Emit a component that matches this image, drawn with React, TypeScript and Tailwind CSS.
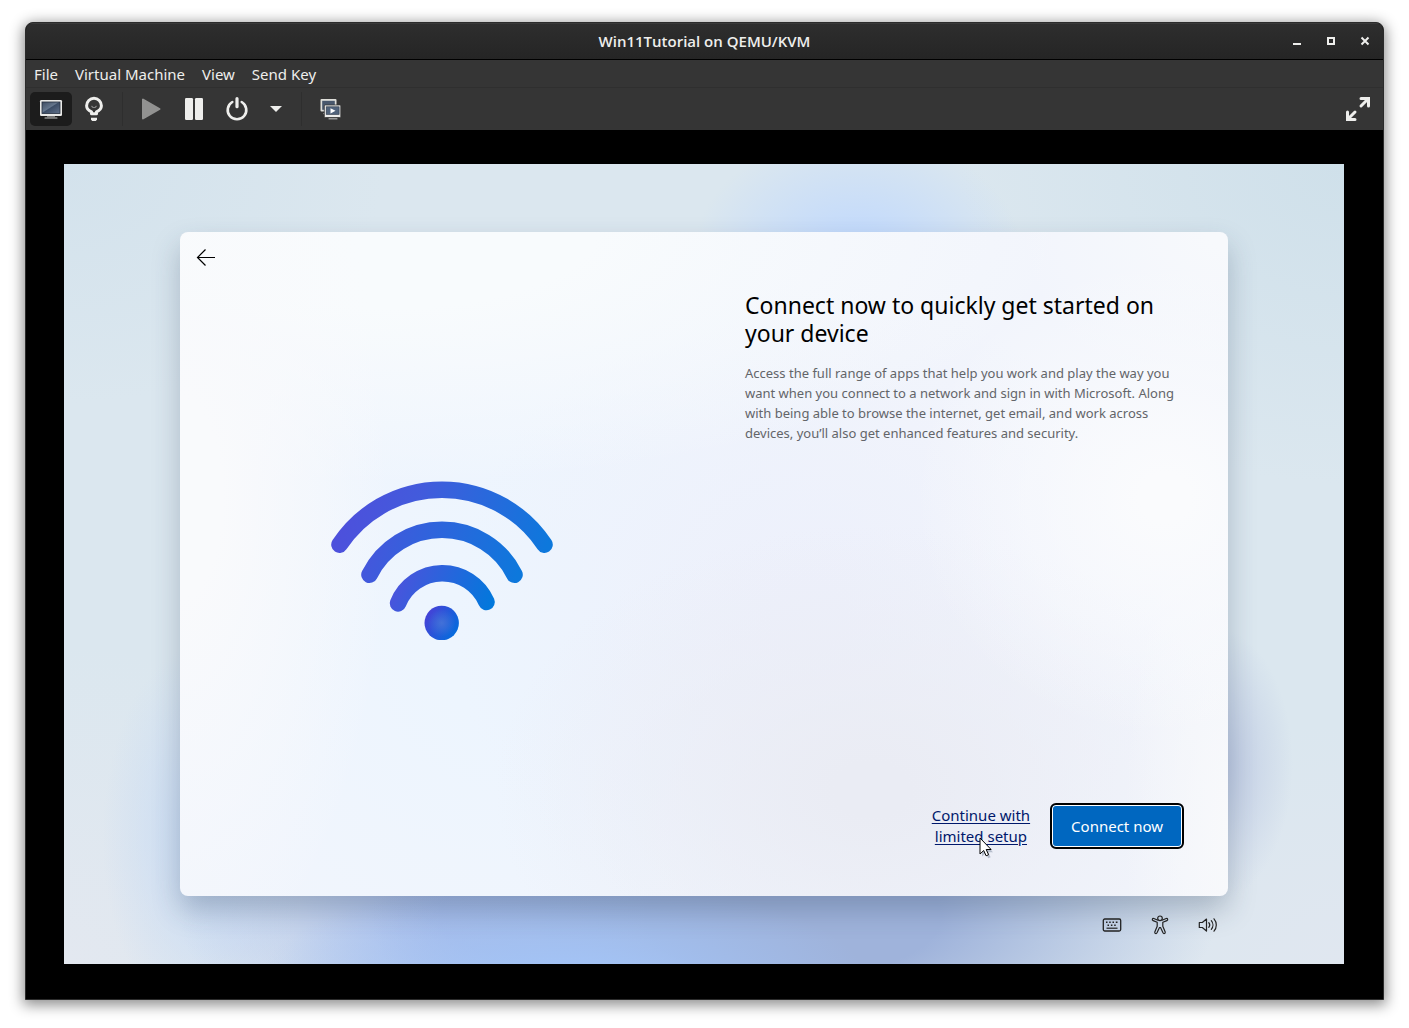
import React from 'react';

function MonitorIcon() {
  return (
    <svg width="24" height="24" viewBox="0 0 24 24" aria-hidden="true">
      <defs>
        <linearGradient id="screen" x1="0" y1="0" x2="1" y2="1">
          <stop offset="0" stopColor="#3d4b60" />
          <stop offset="0.45" stopColor="#65768c" />
          <stop offset="0.5" stopColor="#3c4d66" />
          <stop offset="1" stopColor="#61718a" />
        </linearGradient>
      </defs>
      <rect x="1" y="3" width="22" height="16" rx="1.2" fill="#e9e9e7" />
      <rect x="3" y="5" width="18" height="11.5" fill="url(#screen)" stroke="#26303f" strokeWidth="0.8" />
      <rect x="8" y="19" width="8" height="1.5" fill="#777" />
      <rect x="5.5" y="20.2" width="13" height="1.6" rx="0.6" fill="#8c8c8a" />
    </svg>
  );
}

function BulbIcon() {
  return (
    <svg width="24" height="26" viewBox="0 0 24 26" fill="none" aria-hidden="true">
      <path d="M9.500 17.800v-2C6.600 14.500 4.600 12.800 4.600 9.700a7.400 7.400 0 0 1 14.800 0c0 3.100-2 4.800-4.900 6.100v2z" stroke="#eeeeec" strokeWidth="3" strokeLinejoin="round" />
      <path d="M9.500 10l1.400 1.500h2.200l1.400-1.500" stroke="#888" strokeWidth="1.100" />
      <path d="M9 21.800h6v1.600l-1.200 1.500h-3.600L9 23.400z" fill="#eeeeec" />
    </svg>
  );
}

function PowerIcon() {
  return (
    <svg width="24" height="24" viewBox="0 0 24 24" fill="none" stroke="#eeeeec" aria-hidden="true">
      <path d="M7.300 5A9.300 9.300 0 1 0 16.700 5" strokeWidth="2.600" strokeLinecap="round" />
      <path d="M12 1.700v8" strokeWidth="3.200" strokeLinecap="round" />
    </svg>
  );
}

function SnapshotsIcon() {
  return (
    <svg width="24" height="24" viewBox="0 0 24 24" aria-hidden="true">
      <rect x="1.500" y="2" width="16" height="12.500" rx="1" fill="#deded9" />
      <rect x="3.200" y="3.800" width="12.600" height="9" fill="#49586d" />
      <rect x="4" y="16" width="4" height="1.200" fill="#888" />
      <rect x="5.300" y="8" width="16.500" height="12.500" rx="1" fill="#eeeeec" stroke="#353535" strokeWidth="0.800" />
      <rect x="7.200" y="9.800" width="12.900" height="7.600" fill="#51637b" stroke="#2b3646" strokeWidth="0.600" />
      <path d="M11.500 11.200l5 2.600-5 2.600z" fill="#fff" />
      <rect x="9.500" y="21" width="9" height="1.500" rx="0.500" fill="#999" />
    </svg>
  );
}

function FullscreenIcon() {
  return (
    <svg width="26" height="26" viewBox="0 0 26 26" fill="none" stroke="#eeeeec" strokeWidth="3" aria-hidden="true">
      <path d="M16 2.500h7.500V10" strokeLinecap="round" />
      <path d="M22.500 3.500L16 10" strokeLinecap="round" />
      <path d="M18 1h7v7z" fill="#eeeeec" stroke="none" />
      <path d="M10 23.500H2.500V16" strokeLinecap="round" />
      <path d="M3.500 22.500L10 16" strokeLinecap="round" />
      <path d="M8 25H1v-7z" fill="#eeeeec" stroke="none" />
    </svg>
  );
}

function WifiArt() {
  return (
    <svg width="224" height="160" viewBox="0 0 224 160" fill="none" aria-hidden="true">
      <defs>
        <linearGradient id="arc1" gradientUnits="userSpaceOnUse" x1="10" y1="40" x2="212" y2="90">
          <stop offset="0" stopColor="#4d50dc" />
          <stop offset="0.35" stopColor="#425bdc" />
          <stop offset="1" stopColor="#0d78dc" />
        </linearGradient>
        <linearGradient id="arc2" gradientUnits="userSpaceOnUse" x1="38" y1="70" x2="184" y2="110">
          <stop offset="0" stopColor="#4457dc" />
          <stop offset="1" stopColor="#0d78dc" />
        </linearGradient>
        <linearGradient id="arc3" gradientUnits="userSpaceOnUse" x1="64" y1="95" x2="158" y2="132">
          <stop offset="0" stopColor="#4d52dc" />
          <stop offset="1" stopColor="#0278dc" />
        </linearGradient>
        <radialGradient id="dotGlow">
          <stop offset="0" stopColor="#4a78d8" stopOpacity="0.800" />
          <stop offset="1" stopColor="#4a78d8" stopOpacity="0" />
        </radialGradient>
        <linearGradient id="dot" x1="0" y1="0.200" x2="1" y2="0.800">
          <stop offset="0" stopColor="#4a3fd6" />
          <stop offset="1" stopColor="#006fdd" />
        </linearGradient>
      </defs>
      <g strokeWidth="16.600" strokeLinecap="round">
        <path d="M9.500 64.700A123 123 0 0 1 214.500 64.700" stroke="url(#arc1)" />
        <path d="M39.500 94.700A81 81 0 0 1 184.500 94.700" stroke="url(#arc2)" />
        <path d="M68 123.300A48 48 0 0 1 156.500 122" stroke="url(#arc3)" />
      </g>
      <circle cx="111.700" cy="143" r="17.200" fill="url(#dot)" />
      <circle cx="111.700" cy="143" r="14" fill="url(#dotGlow)" />
    </svg>
  );
}

function KeyboardIcon() {
  return (
    <svg width="20" height="20" viewBox="0 0 20 20" fill="none" stroke="#222" aria-hidden="true">
      <rect x="1.300" y="4" width="17.400" height="12" rx="1.500" strokeWidth="1.300" />
      <path d="M4 7.300h1.500M7.200 7.300h1.500M10.500 7.300H12M13.800 7.300h1.700M5.500 10.200H7M8.900 10.200h1.500M12.200 10.200h1.500" strokeWidth="1.500" />
      <path d="M4.500 13.200h11" strokeWidth="1.200" />
    </svg>
  );
}

function AccessibilityIcon() {
  return (
    <svg width="20" height="20" viewBox="0 0 20 20" fill="none" stroke="#222" strokeWidth="1.200" strokeLinejoin="round" aria-hidden="true">
      <circle cx="10" cy="3.300" r="2.300" />
      <path d="M8 5.200L3.800 3.500c-1.500-.4-2.100 1.500-.7 2.100L7.200 7.300v4L4.800 17c-.4 1.500 1.500 2.200 2.200.8l2.500-5.300h1l2.500 5.300c.7 1.400 2.600.7 2.200-.8l-2.400-5.700v-4l4.100-1.700c1.400-.6.8-2.500-.7-2.100L12 5.200" />
    </svg>
  );
}

function VolumeIcon() {
  return (
    <svg width="20" height="20" viewBox="0 0 20 20" fill="none" stroke="#222" strokeWidth="1.200" strokeLinecap="round" strokeLinejoin="round" aria-hidden="true">
      <path d="M1.300 7.500v5h3L8.500 16V4L4.300 7.500z" />
      <path d="M10.800 7.700a3.600 3.600 0 0 1 0 4.600M13.300 5.700a6.500 6.500 0 0 1 0 8.600M16 3.800a9.500 9.500 0 0 1 0 12.400" />
    </svg>
  );
}

const toolButton = 'flex h-[34px] items-center justify-center rounded-[5px]';
const trayButton = 'flex h-6 w-6 items-center justify-center';

export default function App() {
  return (
    <div className="flex min-h-screen flex-col bg-white px-[25px] pt-[22px] pb-7 font-['Noto_Sans',sans-serif]">
      <div className="flex flex-1 flex-col overflow-hidden rounded-t-lg border border-[#2b2b2b] bg-black shadow-[0_3px_14px_2px_rgba(0,0,0,0.45)]">
        <header className="grid h-[37px] shrink-0 grid-cols-[1fr_auto_1fr] items-center border-b border-black bg-linear-to-b from-[#2e2e2e] to-[#252525] shadow-[inset_0_1px_0_#3a3a3a]">
          <span />
          <h1 className="font-['Open_Sans','Noto_Sans',sans-serif] text-[15px] leading-5 font-semibold text-[#eeeeec]">
            Win11Tutorial on QEMU/KVM
          </h1>
          <div className="flex justify-end gap-2.5 pr-1.5">
            <button aria-label="Minimize" className="flex h-6 w-6 items-center justify-center">
              <svg width="10" height="10"><path d="M1 7h8v2H1z" fill="#eeeeec" /></svg>
            </button>
            <button aria-label="Maximize" className="flex h-6 w-6 items-center justify-center">
              <svg width="10" height="10"><path d="M2 2h6v6H2z" fill="none" stroke="#eeeeec" strokeWidth="2" /></svg>
            </button>
            <button aria-label="Close" className="flex h-6 w-6 items-center justify-center">
              <svg width="10" height="10"><path d="M1.500 1.500l7 7M8.500 1.500l-7 7" stroke="#eeeeec" strokeWidth="2" /></svg>
            </button>
          </div>
        </header>

        <nav className="flex h-7 shrink-0 items-center gap-[17px] border-b border-[#2f2f2f] bg-[#353535] px-2 text-[15px] leading-6 text-[#eeeeec]">
          <button>File</button>
          <button>Virtual Machine</button>
          <button>View</button>
          <button>Send Key</button>
        </nav>

        <div className="flex h-[42px] shrink-0 items-center bg-[#353535] px-1">
          <button aria-label="Show the graphical console" className={`${toolButton} w-[42px] bg-[#1c1c1c]`}><MonitorIcon /></button>
          <button aria-label="Show virtual hardware details" className={`${toolButton} w-11`}><BulbIcon /></button>
          <span className="mx-1.5 h-[34px] w-px bg-[#2e2e2e]" />
          <button aria-label="Run" className={`${toolButton} w-11`}>
            <svg width="20" height="22" viewBox="0 0 20 22"><path d="M2 1.500v19L18.500 11z" fill="#929291" stroke="#929291" strokeWidth="2" strokeLinejoin="round" /></svg>
          </button>
          <button aria-label="Pause" className={`${toolButton} w-[42px]`}>
            <svg width="18" height="22" fill="#eeeeec"><rect width="8" height="22" rx="1.200" /><rect x="10" width="8" height="22" rx="1.200" /></svg>
          </button>
          <button aria-label="Shut down" className={`${toolButton} w-11`}><PowerIcon /></button>
          <button aria-label="Power options" className={`${toolButton} w-[34px]`}>
            <svg width="12" height="6"><path d="M0 0h12L6 6z" fill="#eeeeec" /></svg>
          </button>
          <span className="mx-2 h-[34px] w-px bg-[#2e2e2e]" />
          <button aria-label="Manage snapshots" className={`${toolButton} w-[42px]`}><SnapshotsIcon /></button>
          <button aria-label="Fullscreen" className={`${toolButton} ml-auto w-[42px]`}><FullscreenIcon /></button>
        </div>

        <main className="flex flex-1 flex-col pt-[34px] pr-[39px] pb-[35px] pl-[38px]">
          <div className="flex flex-1 flex-col bg-[#dbe7ef] bg-[radial-gradient(ellipse_13%_16%_at_62%_12%,#bdd7ff_0%,#bdd7ff00_100%),radial-gradient(ellipse_24%_14%_at_39%_103%,#a3c3f5_20%,#a3c3f500_100%),radial-gradient(ellipse_33%_22%_at_57%_94%,#9fb3db_35%,#9fb3db00_100%),radial-gradient(ellipse_27%_20%_at_36%_94%,#a9bdeb_25%,#a9bdeb00_100%),radial-gradient(ellipse_6%_17%_at_90%_75%,#bcc8e2_0%,#bcc8e200_100%),radial-gradient(ellipse_8%_24%_at_11%_84%,#c6daf4_0%,#c6daf400_100%),radial-gradient(ellipse_25%_40%_at_0%_100%,#e3e8f0_0%,#e3e8f000_100%),radial-gradient(ellipse_25%_30%_at_100%_100%,#e0e7f0_0%,#e0e7f000_100%),radial-gradient(ellipse_30%_40%_at_100%_0%,#cfe0ea_0%,#cfe0ea00_100%),radial-gradient(ellipse_25%_30%_at_0%_0%,#d3e2ec_0%,#d3e2ec00_100%)] px-[116px] pt-[68px]">
            <section className="flex flex-1 flex-col rounded-lg bg-[#f2f5fc] bg-[radial-gradient(ellipse_24%_36%_at_94%_40%,#fafbfd_10%,#fafbfd00_100%),radial-gradient(ellipse_20%_25%_at_100%_0%,#f7f9fc_10%,#f7f9fc00_100%),radial-gradient(ellipse_10%_50%_at_100%_90%,#f8f9fb_0%,#f8f9fb00_100%),radial-gradient(ellipse_20%_75%_at_0%_40%,#f9fafc_20%,#f9fafc00_100%),radial-gradient(ellipse_65%_38%_at_20%_0%,#f8fbfd_30%,#f8fbfd00_100%),radial-gradient(ellipse_36%_40%_at_66%_84%,#eaecf4_10%,#eaecf400_100%),radial-gradient(ellipse_34%_50%_at_60%_58%,#edf0fb_10%,#edf0fb00_100%),radial-gradient(ellipse_42%_70%_at_32%_60%,#edf5fe_20%,#edf5fe00_100%)] shadow-[0_14px_28px_rgba(40,60,90,0.28)]">
              <div className="flex h-[51px] items-center px-3">
                <button aria-label="Back" className="flex h-7 w-7 items-center justify-center">
                  <svg width="20" height="18" viewBox="0 0 20 18" fill="none" stroke="#000" strokeWidth="1.200"><path d="M19 8.500H1.500M9.500 0.500L1.500 8.500l8 8" /></svg>
                </button>
              </div>
              <div className="grid flex-1 grid-cols-2">
                <div className="flex items-center justify-center pb-[60px]"><WifiArt /></div>
                <div className="flex flex-col pt-2 pr-11 pb-[47px] pl-[41px]">
                  <h2 className="text-[23px] leading-7 font-normal whitespace-nowrap text-black">
                    Connect now to quickly get started on<br />your device
                  </h2>
                  <p className="mt-4 text-[13px] leading-5 whitespace-nowrap text-[#636569]">
                    Access the full range of apps that help you work and play the way you<br />
                    want when you connect to a network and sign in with Microsoft. Along<br />
                    with being able to browse the internet, get email, and work across<br />
                    devices, you’ll also get enhanced features and security.
                  </p>
                  <div className="mt-auto flex items-center justify-end gap-5 text-[15px]">
                    <a href="#limited-setup" className="relative text-center leading-[21px] text-[#00186b] underline underline-offset-2">
                      Continue with<br />limited setup
                      <svg className="absolute top-8 left-[47px]" width="16" height="22" viewBox="0 0 16 22" aria-hidden="true">
                        <path d="M3 3v16.500l3.700-3.300 2.500 5 2.400-1-2.300-5h4.700z" fill="#64748b" opacity="0.400" />
                        <path d="M1 1v16l3.700-3.500 2.400 5.300 2.500-1.100-2.400-5.200h4.900z" fill="#fff" stroke="#000" />
                      </svg>
                    </a>
                    <button className="h-[46px] rounded-md border-2 border-black bg-[#0067c0] px-[19px] leading-5 text-white shadow-[inset_0_0_0_1px_#fff]">
                      Connect now
                    </button>
                  </div>
                </div>
              </div>
            </section>
            <div className="flex h-[68px] items-start justify-end gap-6 pt-[17px] pr-2">
              <button aria-label="Keyboard" className={trayButton}><KeyboardIcon /></button>
              <button aria-label="Accessibility" className={trayButton}><AccessibilityIcon /></button>
              <button aria-label="Volume" className={trayButton}><VolumeIcon /></button>
            </div>
          </div>
        </main>
      </div>
    </div>
  );
}
